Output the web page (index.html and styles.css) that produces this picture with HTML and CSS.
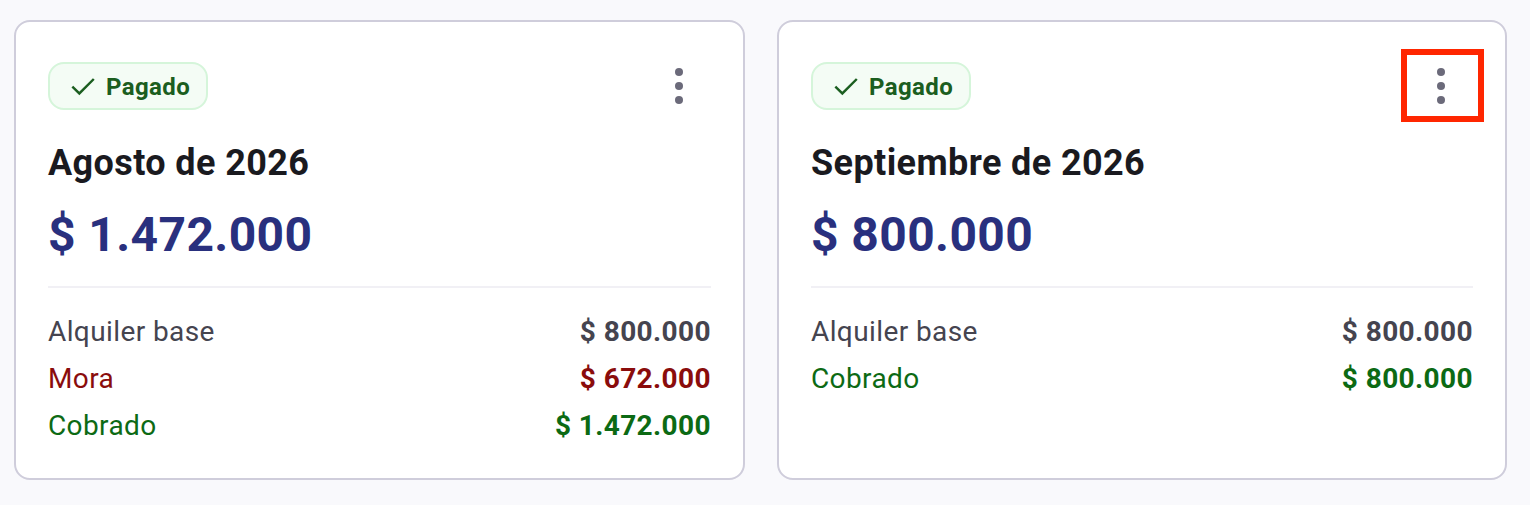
FILE: index.html
```html
<!DOCTYPE html>
<html lang="es">
<head>
    <meta charset="UTF-8">
    <title>Pagos</title>
    <link rel="stylesheet" href="styles.css">
</head>
<body>
    <div class="cards">
        <div class="card">
            <div class="card-top">
                <span class="badge">
                    <svg class="check" viewBox="0 0 24 24" width="28" height="28"><path d="M2 12.6l6 5.8L20.4 6" fill="none" stroke="#1b5e20" stroke-width="2.1"/></svg>
                    <span class="badge-text">Pagado</span>
                </span>
                <button class="menu-button">
                    <span class="dot"></span><span class="dot"></span><span class="dot"></span>
                </button>
            </div>
            <h2>Agosto de 2026</h2>
            <div class="amount">$ 1.472.000</div>
            <div class="rows">
                <div class="row"><span>Alquiler base</span><b>$ 800.000</b></div>
                <div class="row late"><span>Mora</span><b>$ 672.000</b></div>
                <div class="row paid"><span>Cobrado</span><b>$ 1.472.000</b></div>
            </div>
        </div>
        <div class="card">
            <div class="card-top">
                <span class="badge">
                    <svg class="check" viewBox="0 0 24 24" width="28" height="28"><path d="M2 12.6l6 5.8L20.4 6" fill="none" stroke="#1b5e20" stroke-width="2.1"/></svg>
                    <span class="badge-text">Pagado</span>
                </span>
                <button class="menu-button highlighted">
                    <span class="dot"></span><span class="dot"></span><span class="dot"></span>
                </button>
            </div>
            <h2>Septiembre de 2026</h2>
            <div class="amount">$ 800.000</div>
            <div class="rows">
                <div class="row"><span>Alquiler base</span><b>$ 800.000</b></div>
                <div class="row paid"><span>Cobrado</span><b>$ 800.000</b></div>
            </div>
        </div>
    </div>
</body>
</html>
```

FILE: styles.css
```css
body {
    font-family: Roboto, sans-serif;
    background-color: #f9f9fc;
    color: #1a1a1f;
    margin: 0;
    padding: 0;
}

.cards {
    display: grid;
    grid-template-columns: 731px 730px;
    gap: 32px;
    padding: 20px 0 0 14px;
}

.card {
    box-sizing: border-box;
    height: 460px;
    background-color: #fff;
    border: 2px solid #cfcddb;
    border-radius: 16px;
    padding: 40px 32px 0;
}

.card-top {
    display: flex;
    justify-content: space-between;
    align-items: center;
    height: 48px;
}

.badge {
    box-sizing: border-box;
    display: inline-flex;
    align-items: center;
    gap: 8px;
    height: 48px;
    padding: 0 16px 0 20px;
    background-color: #f4fcf5;
    border: 2px solid #d5f5da;
    border-radius: 16px;
    color: #1b5e20;
    font-size: 24px;
    font-weight: 700;
    letter-spacing: 0.4px;
}

.badge-text {
    padding-top: 2px;
}

.menu-button {
    position: relative;
    display: flex;
    flex-direction: column;
    align-items: center;
    justify-content: center;
    gap: 6px;
    width: 64px;
    height: 48px;
    padding: 0;
    border: none;
    background: none;
}

.dot {
    width: 8px;
    height: 8px;
    border-radius: 50%;
    background-color: #6b6a7a;
}

.highlighted::after {
    content: "";
    position: absolute;
    left: -8px;
    top: -13px;
    width: 71px;
    height: 61px;
    border: 6px solid #ff2600;
}

h2 {
    margin: 31px 0 0;
    font-size: 36px;
    line-height: 44px;
    font-weight: 700;
    letter-spacing: 0.4px;
}

.amount {
    margin-top: 22px;
    color: #29307e;
    font-size: 48px;
    line-height: 56px;
    font-weight: 700;
    letter-spacing: 0.4px;
}

.rows {
    margin-top: 23px;
    padding-top: 20px;
    border-top: 2px solid #f1f0f5;
}

.row {
    display: flex;
    justify-content: space-between;
    height: 47px;
    line-height: 47px;
    color: #45444f;
    font-size: 28px;
    letter-spacing: 0.4px;
}

.late {
    color: #8a0c0c;
}

.paid {
    color: #0c6a14;
}
```
